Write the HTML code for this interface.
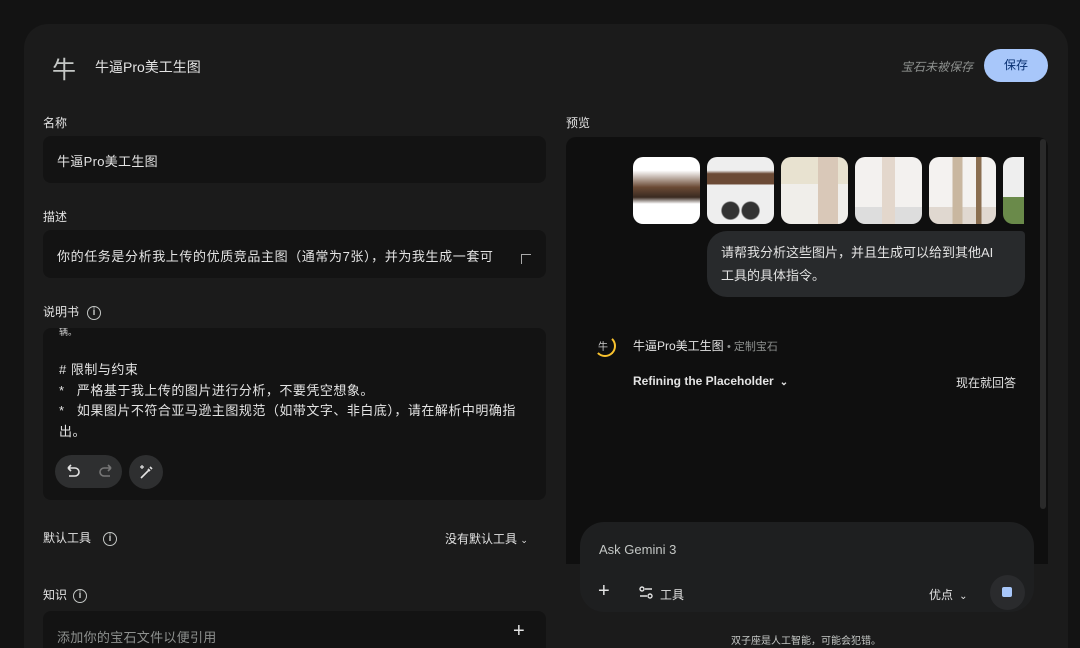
<!DOCTYPE html>
<html><head><meta charset="utf-8">
<style>
*{box-sizing:border-box;margin:0;padding:0}
html,body{width:1080px;height:648px;overflow:hidden}
body{background:#131313;font-family:"Liberation Sans","Noto Sans CJK SC",sans-serif;color:#e3e3e3;position:relative}
.card{position:absolute;left:24px;top:24px;width:1044px;height:624px;background:#1b1b1b;border-radius:24px 24px 0 0}
.a{position:absolute}
.lbl{font-size:12px;color:#e3e3e3}
.box{position:absolute;background:#131313;border-radius:8px}
.info{display:inline-block;width:14px;height:14px;border:1.5px solid #c4c7c5;border-radius:50%;font-size:10px;line-height:11px;text-align:center;font-weight:bold;color:#c4c7c5;vertical-align:middle;margin-left:8px}
.th{position:absolute;top:157px;width:67px;height:67px;border-radius:10px;overflow:hidden;background:#f2f0ee}
</style></head><body>
<div class="card"></div>
<div class="a" style="left:52px;top:50px;font-size:24px;color:#c4c7c5">牛</div>
<div class="a" style="left:95px;top:57px;font-size:14px">牛逼Pro美工生图</div>
<div class="a" style="left:901px;top:58px;font-size:12px;color:#8e918f;font-style:italic">宝石未被保存</div>
<div class="a" style="left:984px;top:49px;width:64px;height:33px;border-radius:17px;background:#a8c7fa;color:#062e6f;font-size:12px;text-align:center;line-height:33px">保存</div>

<div class="a lbl" style="left:43px;top:114px">名称</div>
<div class="box" style="left:43px;top:136px;width:503px;height:47px"></div>
<div class="a" style="left:57px;top:151px;font-size:13px;letter-spacing:0.3px">牛逼Pro美工生图</div>
<div class="a lbl" style="left:43px;top:208px">描述</div>
<div class="box" style="left:43px;top:230px;width:503px;height:48px"></div>
<div class="a" style="left:57px;top:246px;font-size:13px;letter-spacing:0.6px">你的任务是分析我上传的优质竞品主图（通常为7张），并为我生成一套可</div>
<div class="a" style="left:521px;top:254px;width:10px;height:10px;border-left:1px solid #aaa;border-top:1px solid #aaa"></div>
<div class="a lbl" style="left:43px;top:303px">说明书<span class="info">i</span></div>
<div class="box" style="left:43px;top:328px;width:503px;height:172px"></div>
<div class="a" style="left:59px;top:328px;font-size:9px;color:#ccc;height:8px;overflow:hidden;line-height:8px">辆。</div>
<div class="a" style="left:59px;top:360px;font-size:13px;line-height:20.5px;width:462px;letter-spacing:0.5px">
# 限制与约束<br>*&nbsp;&nbsp; 严格基于我上传的图片进行分析，不要凭空想象。<br>*&nbsp;&nbsp; 如果图片不符合亚马逊主图规范（如带文字、非白底），请在解析中明确指出。</div>
<div class="a" style="left:55px;top:455px;width:67px;height:33px;border-radius:17px;background:#2e2f30"></div>
<svg class="a" style="left:64px;top:463px" width="52" height="18" viewBox="0 0 52 18"><path d="M4 5h7a4 4 0 0 1 0 8H5M4 5l3-3M4 5l3 3" stroke="#e3e3e3" stroke-width="1.6" fill="none"/><path d="M47 5h-7a4 4 0 0 0 0 8h6M47 5l-3-3M47 5l-3 3" stroke="#777" stroke-width="1.6" fill="none"/></svg>
<div class="a" style="left:129px;top:455px;width:34px;height:34px;border-radius:50%;background:#2e2f30"></div>
<svg class="a" style="left:137px;top:463px" width="18" height="18" viewBox="0 0 18 18"><path d="M4 15L12 7M11 6l2 2M13 4l2 2" stroke="#e3e3e3" stroke-width="1.6" fill="none"/><path d="M5 2v4M3 4h4" stroke="#e3e3e3" stroke-width="1.2"/></svg>

<div class="a lbl" style="left:43px;top:529px">默认工具<span class="info" style="margin-left:12px">i</span></div>
<div class="a" style="left:445px;top:530px;font-size:12px">没有默认工具 <span style="font-size:9px">⌄</span></div>
<div class="a lbl" style="left:43px;top:586px">知识<span class="info" style="margin-left:6px">i</span></div>
<div class="box" style="left:43px;top:611px;width:503px;height:45px"></div>
<div class="a" style="left:57px;top:627px;font-size:13px;color:#8e918f;letter-spacing:0.3px">添加你的宝石文件以便引用</div>
<div class="a" style="left:513px;top:620px;font-size:20px;color:#e3e3e3">+</div>

<div class="a lbl" style="left:566px;top:114px">预览</div>
<div class="a" style="left:566px;top:137px;width:482px;height:427px;background:#0f0f0f;border-radius:10px 10px 0 0"></div>
<div class="a" style="left:1040px;top:139px;width:6px;height:370px;background:#2a2a2a;border-radius:3px"></div>
<div class="th" style="left:633px;background:linear-gradient(#fff 20%,#6b4a35 45%,#3a2a20 60%,#fff 70%)"></div>
<div class="th" style="left:707px;background:radial-gradient(circle at 35% 80%,#333 12%,transparent 14%),radial-gradient(circle at 65% 80%,#333 12%,transparent 14%),linear-gradient(#eee 20%,#6b4a35 25%,#6b4a35 40%,#eee 42%)"></div>
<div class="th" style="left:781px;background:linear-gradient(90deg,transparent 55%,#d9c8b8 55%,#d9c8b8 85%,transparent 85%),linear-gradient(#e8e2d0 40%,#f0eeea 40%)"></div>
<div class="th" style="left:855px;background:linear-gradient(90deg,transparent 40%,#e3d7cc 40%,#e3d7cc 60%,transparent 60%),linear-gradient(#f3f1ef 75%,#ddd 75%)"></div>
<div class="th" style="left:929px;background:linear-gradient(90deg,transparent 35%,#c9b7a0 35%,#c9b7a0 50%,transparent 50%,transparent 70%,#8a6e50 70%,#8a6e50 78%,transparent 78%),linear-gradient(#f4f2f0 75%,#e0d8d0 75%)"></div>
<div class="th" style="left:1003px;width:21px;border-radius:10px 0 0 10px;background:linear-gradient(#eee 60%,#6a8a4a 60%)"></div>
<div class="a" style="left:707px;top:231px;width:318px;height:66px;background:#282a2c;border-radius:20px 4px 20px 20px"></div>
<div class="a" style="left:721px;top:241px;font-size:13px;line-height:23px;width:285px">请帮我分析这些图片，并且生成可以给到其他AI<br>工具的具体指令。</div>
<div class="a" style="left:594px;top:335px;width:22px;height:22px;border-radius:50%;border:2px solid transparent;border-right-color:#f9c22e;border-bottom-color:#f9c22e"></div>
<div class="a" style="left:598px;top:338px;font-size:10px;color:#ccc">牛</div>
<div class="a" style="left:633px;top:337px;font-size:12px">牛逼Pro美工生图 <span style="color:#8e918f;font-size:11px">• 定制宝石</span></div>
<div class="a" style="left:633px;top:374px;font-size:12px;font-weight:bold">Refining the Placeholder <span style="font-size:10px">&nbsp;⌄</span></div>
<div class="a" style="left:956px;top:374px;font-size:12px">现在就回答</div>

<div class="a" style="left:580px;top:522px;width:454px;height:90px;background:#1e1f20;border-radius:24px"></div>
<div class="a" style="left:599px;top:542px;font-size:13px;color:#c4c7c5">Ask Gemini 3</div>
<div class="a" style="left:598px;top:580px;font-size:20px;color:#e3e3e3">+</div>
<svg class="a" style="left:639px;top:586px" width="14" height="14" viewBox="0 0 14 14"><circle cx="3" cy="3" r="2" stroke="#e3e3e3" fill="none" stroke-width="1.4"/><path d="M6 3h7M1 10h7" stroke="#e3e3e3" stroke-width="1.4"/><circle cx="11" cy="10" r="2" stroke="#e3e3e3" fill="none" stroke-width="1.4"/></svg>
<div class="a" style="left:660px;top:586px;font-size:12px">工具</div>
<div class="a" style="left:929px;top:586px;font-size:12px">优点 <span style="font-size:10px">&nbsp;⌄</span></div>
<div class="a" style="left:990px;top:575px;width:35px;height:35px;border-radius:50%;background:#2a2b2d"></div>
<div class="a" style="left:1002px;top:587px;width:10px;height:10px;border-radius:2px;background:#a8c7fa"></div>
<div class="a" style="left:731px;top:632px;font-size:10px;color:#c4c7c5">双子座是人工智能，可能会犯错。</div>
</body></html>
